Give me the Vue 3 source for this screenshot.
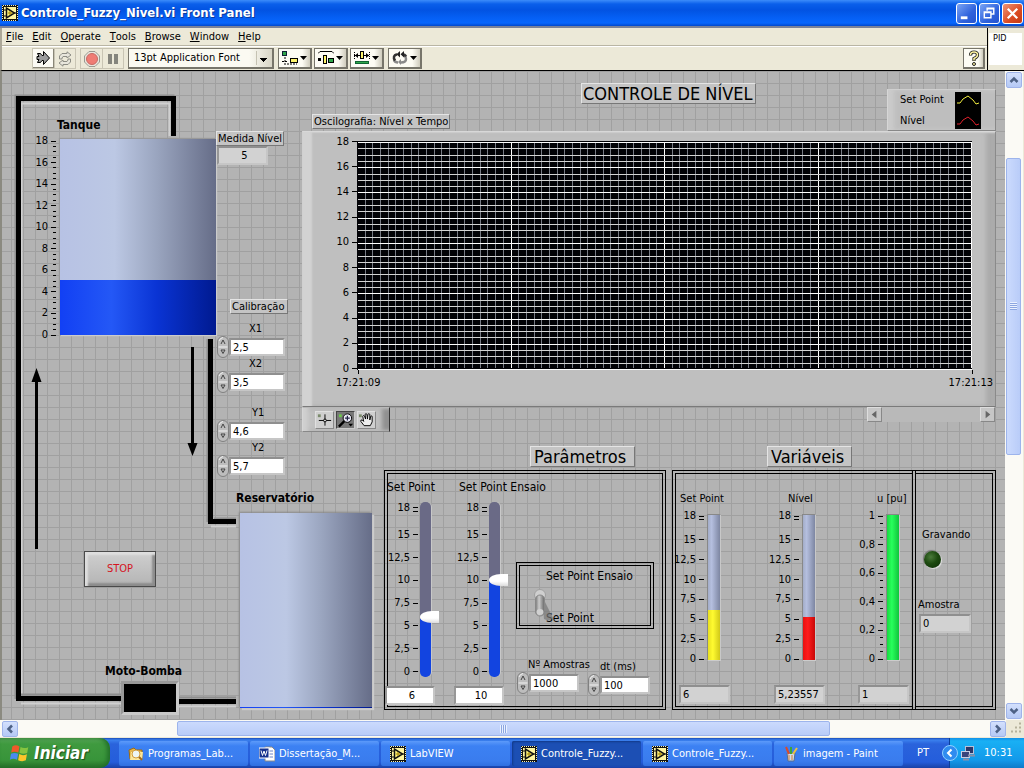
<script setup>
import { ref } from 'vue'

const menus = ['File', 'Edit', 'Operate', 'Tools', 'Browse', 'Window', 'Help']

const steps = (max, step) => {
  const out = []
  for (let i = 0; i * step <= max + 0.0001; i++) out.push(Math.round(i * step * 100) / 100)
  return out
}
const fmt = (v) => String(v).replace('.', ',')
const pct = (v, max) => ({ bottom: (v / max) * 100 + '%' })
const level = (v, max) => ({ height: (v / max) * 100 + '%' })

const evenTicks = steps(18, 2)
const halfTicks = steps(18, 0.5).filter((v) => v % 2 !== 0)
const barTicks = [0, 2.5, 5, 7.5, 10, 12.5, 15, 18]
const unitTicks = [0, 0.2, 0.4, 0.6, 0.8, 1]
const unitMinor = steps(1, 0.05).filter((v) => !unitTicks.includes(v))

const calibration = ref([
  { id: 'x1', label: 'X1', value: '2,5' },
  { id: 'x2', label: 'X2', value: '3,5' },
  { id: 'y1', label: 'Y1', value: '4,6' },
  { id: 'y2', label: 'Y2', value: '5,7' }
])
const acquisition = ref([
  { id: 'samples', label: 'Nº Amostras', value: '1000' },
  { id: 'dt', label: 'dt (ms)', value: '100' }
])
const sliders = ref([
  { id: 'sp', label: 'Set Point', value: 6 },
  { id: 'spe', label: 'Set Point Ensaio', value: 10 }
])
const bars = [
  { id: 'gsp', label: 'Set Point', value: 6.2, shown: '6', max: 18, ticks: barTicks, minor: [17.5], fill: 'yellow' },
  { id: 'gnv', label: 'Nível', value: 5.4, shown: '5,23557', max: 18, ticks: barTicks, minor: [17.5], fill: 'red' },
  { id: 'gu', label: 'u [pu]', value: 1, shown: '1', max: 1, ticks: unitTicks, minor: unitMinor, fill: 'green' }
]
const rows = Array.from({ length: 37 }, (_, i) => ({ p: Math.round(1 + (i * 227) / 36), major: i % 4 === 0 }))
const cols = Array.from({ length: 81 }, (_, i) => ({ p: Math.round((i * 614) / 80), major: i % 20 === 0 }))

const tasks = [
  { text: 'Programas_Lab...', icon: 'folder' },
  { text: 'Dissertação_M...', icon: 'word' },
  { text: 'LabVIEW', icon: 'vi' },
  { text: 'Controle_Fuzzy...', icon: 'vi', active: true },
  { text: 'Controle_Fuzzy...', icon: 'vi' },
  { text: 'imagem - Paint', icon: 'paint' }
]
</script>

<template>
  <div class="screen">
    <svg class="defs" width="0" height="0" aria-hidden="true">
      <symbol id="i-vi" viewBox="0 0 16 16">
        <rect width="16" height="16" fill="#111" />
        <path d="M1 .5h14M1 15.5h14M.5 1v14M15.500 1v14" stroke="#f6efb0" stroke-dasharray="1 1" />
        <rect x="2" y="2" width="12" height="12" fill="#fff6a0" />
        <path d="M2 5h3M2 11h3M11 8h3" stroke="#111" />
        <path d="M4.500 3v10l8-5z" fill="#fff27c" stroke="#111" stroke-width="1.500" />
        <path d="M6 8h4M8 6v4" stroke="#a08000" />
      </symbol>
      <symbol id="i-folder" viewBox="0 0 16 16">
        <path d="M1 4l5-2 2 2h6v9H2z" fill="#e8b64a" stroke="#9c6a14" />
        <path d="M3 6h12l-1 8H2z" fill="#fde79a" />
        <circle cx="8" cy="8" r="4" fill="#eef6f4" stroke="#d29c3c" />
        <path d="M11 11l3 3" stroke="#a06a20" stroke-width="2" />
      </symbol>
      <symbol id="i-word" viewBox="0 0 16 16">
        <path d="M6 1h7l3 3v11H6z" fill="#fff" stroke="#888" />
        <path d="M10 5h4M10 8h4M10 11h4" stroke="#6a84c8" />
        <rect x="0" y="2" width="10" height="10" fill="#17338f" stroke="#fff" />
        <path d="M2 4.500l1.500 5L5 5l1.500 4.500 1.500-5" fill="none" stroke="#fff" />
      </symbol>
      <symbol id="i-paint" viewBox="0 0 16 16">
        <path d="M4 7h8l-1 8H5z" fill="#cfdcea" stroke="#5a6c8a" />
        <path d="M6 8L3 1" stroke="#d94b2b" stroke-width="2" />
        <path d="M8 8V1" stroke="#3da53d" stroke-width="2" />
        <path d="M10 8l4-6" stroke="#f0c23a" stroke-width="2" />
        <path d="M6 9v5M9 9v5" stroke="#d87a2a" />
      </symbol>
      <symbol id="i-caret" viewBox="0 0 7 4"><path d="M0 0h7L3.500 4z" fill="#000" /></symbol>
    </svg>

    <header class="titlebar">
      <svg class="app-icon"><use href="#i-vi" /></svg>
      <h1>Controle_Fuzzy_Nivel.vi Front Panel</h1>
      <div class="caption">
        <button class="cap" aria-label="Minimize"><svg viewBox="0 0 20 20"><path d="M4 14.500h7" stroke="#fff" stroke-width="3" /></svg></button>
        <button class="cap" aria-label="Restore">
          <svg viewBox="0 0 20 20" fill="none" stroke="#fff"><path d="M7.500 7V4.500h7v6H12M7 5h8M4.500 8.500h7v6h-7zM4 9h8" stroke-width="1.500" /></svg>
        </button>
        <button class="cap close" aria-label="Close"><svg viewBox="0 0 20 20"><path d="M5 5l10 10M15 5L5 15" stroke="#fff" stroke-width="2.400" /></svg></button>
      </div>
    </header>

    <div class="bars">
      <div class="bars-main">
        <nav class="menu">
          <button v-for="m in menus" :key="m"><u>{{ m[0] }}</u>{{ m.slice(1) }}</button>
        </nav>
        <div class="toolbar">
          <div class="pair">
            <button class="tool lit" aria-label="Run">
              <svg viewBox="0 0 16 16"><path d="M2.500 3.500h3l1.500 2h1.500v-4l6 6.500-6 6.500v-4H7l-1.500 2h-3L4 9.500H2v-3h2z" fill="#9c9c9c" stroke="#000" /></svg>
            </button>
            <button class="tool" aria-label="Run Continuously">
              <svg viewBox="0 0 16 16" fill="#e8e6dc" stroke="#8c8c84"><path d="M2.500 8V5L5 2.500h5V.8L14 4l-4 3V5.500H6L5 7v1zM13.500 8v3L11 13.500H6v1.700L2 12l4-3v1.500h4l1-1.500V8z" /></svg>
            </button>
          </div>
          <div class="pair">
            <button class="tool" aria-label="Abort">
              <svg viewBox="0 0 16 16"><path d="M5 .5h6L15.500 5v6L11 15.500H5L.5 11V5z" fill="#e9e5dc" stroke="#9a9a92" /><circle cx="8" cy="8" r="5.500" fill="#f07c74" stroke="#c86a64" /></svg>
            </button>
            <button class="tool" aria-label="Pause"><svg viewBox="0 0 16 16"><path d="M5 3v10M11 3v10" stroke="#85857d" stroke-width="4" /></svg></button>
          </div>
          <select class="font-select" aria-label="Font"><option>13pt Application Font</option></select>
          <button class="drop" aria-label="Align Objects">
            <svg viewBox="0 0 16 14"><rect x=".5" y=".5" width="4" height="4" fill="#2fa84a" stroke="#123" /><rect x="8.500" y="7.500" width="7" height="4" fill="#fdf36a" stroke="#000" /><path d="M3 6v6M0 10.500h6M2 13h13" stroke="#000" stroke-dasharray="2 1" /></svg>
            <svg class="caret"><use href="#i-caret" /></svg>
          </button>
          <button class="drop" aria-label="Distribute Objects">
            <svg viewBox="0 0 16 14"><path d="M0 2.500l2-2h12l2 2" fill="none" stroke="#000" /><rect x="0" y="7" width="3" height="3" /><rect x="5.500" y="4.500" width="3" height="8" fill="#fdf36a" stroke="#000" /><rect x="10.500" y="7.500" width="5" height="4" fill="#2fa84a" stroke="#000" /></svg>
            <svg class="caret"><use href="#i-caret" /></svg>
          </button>
          <button class="drop" aria-label="Resize Objects">
            <svg viewBox="0 0 16 14"><path d="M0 4.500h6M10 4.500h6M.5 1v8M15.500 1v8" stroke="#000" stroke-dasharray="1 1" /><path d="M1 4.500h5M10 4.500h5" stroke="#000" /><path d="M4 2L1 4.500 4 7zM12 2l3 2.500L12 7z" /><rect x="6.500" y=".5" width="3" height="7" fill="#fdf36a" stroke="#000" /><rect x="1.500" y="10.500" width="13" height="2" fill="#2fa84a" stroke="#163" /></svg>
            <svg class="caret"><use href="#i-caret" /></svg>
          </button>
          <button class="drop reorder" aria-label="Reorder">
            <svg viewBox="0 0 16 14"><path d="M9 11.500q5 0 5-3.500 0-2-1.500-3M2 9q1 2.500 4 2.500" fill="none" stroke="#8a8a8a" stroke-width="2.500" /><path d="M9 8v6l-3-3z" fill="#8a8a8a" /><path d="M3 9.500Q0 5 5 3.200M10 3.200q3 0 4 2.300" fill="none" stroke="#333" stroke-width="2.500" /><path d="M8 0v6.500L4.500 3.200zM12 0v6.500L8.500 3.200z" fill="#222" /></svg>
            <svg class="caret"><use href="#i-caret" /></svg>
          </button>
          <button class="drop help" aria-label="Help">
            <svg viewBox="0 0 12 16"><path d="M2.500 5.500Q2.500 2 6 2t3.500 3Q9.500 7 6 8.500V11" fill="none" stroke="#222" stroke-width="3.200" /><path d="M2.500 5Q2.500 2 6 2t3.500 3Q9.500 7 6 8.500V10.500" fill="none" stroke="#fdf3a0" stroke-width="1.500" /><circle cx="6" cy="14" r="1.500" fill="#fdf3a0" stroke="#222" /></svg>
          </button>
        </div>
      </div>
      <div class="vi-icon"><span>PID</span></div>
    </div>

    <div class="work">
      <main class="panel">
        <svg class="piping" viewBox="0 0 300 649" aria-hidden="true">
          <g fill="none" stroke-width="5">
            <path d="M21.500 624V32.500h148V65M211.500 268v179.500M21 632.500h103M176 635.500h60M211 455.500h25" stroke="#d0d0d0" stroke-width="2" />
            <path d="M15.500 628V24.500h159M207.500 268V451M18 623.500h106M176 626.500h60M214 447.500h22" stroke="#8e8e8e" stroke-width="2" />
            <path d="M18.500 625V27.500h155V65" stroke="#000" />
            <path d="M16 627.500h108M176 630.500h60M210.500 268v182.500H236" stroke="#000" />
          </g>
          <path d="M121 610h58v34l-5-3h-50l-3 3z" fill="#999" />
          <path d="M176 613l3-3v34h-58l3-3h52z" fill="#cacaca" />
          <rect x="124" y="613" width="52" height="28" />
          <path d="M36.500 308v170M192.500 276v100" stroke="#000" stroke-width="3" />
          <path d="M36.500 297l5 14h-10zM192.500 385l5-13h-10z" />
        </svg>

        <h2 class="item b tanque-title">Tanque</h2>
        <div class="item tank-row">
          <div class="scale">
            <div v-for="v in halfTicks" :key="'m' + v" class="tick minor" :style="pct(v, 18)"><i></i></div>
            <div v-for="v in evenTicks" :key="v" class="tick" :style="pct(v, 18)"><span>{{ v }}</span><i></i></div>
          </div>
          <div class="tank"><div class="water" :style="level(5.050, 18)"></div></div>
        </div>

        <div class="item tag medida">Medida Nível</div>
        <output class="item readout five">5</output>
        <div class="item tag calib">Calibração</div>

        <div v-for="c in calibration" :key="c.id" class="item numeric" :class="c.id">
          <label :for="c.id">{{ c.label }}</label>
          <div class="num-row">
            <button class="spin" :aria-label="'Ajustar ' + c.label">
              <svg viewBox="0 0 12 22"><rect x=".5" y=".5" width="11" height="21" rx="5.500" fill="#bdbdbd" stroke="#808080" /><path d="M2 5Q3 2 6 1.500M1.500 11h9" fill="none" stroke="#f2f2f2" /><path d="M4 8l2-4 2 4M4 14h4l-2 3.500z" fill="none" stroke="#444" /></svg>
            </button>
            <input :id="c.id" v-model="c.value" type="text" />
          </div>
        </div>

        <h2 class="item b reserv-title">Reservatório</h2>
        <div class="item tank reserv"><div class="water" :style="level(0.100, 18)"></div></div>
        <button class="item stop">STOP</button>
        <h2 class="item b bomba-title">Moto-Bomba</h2>

        <h2 class="item tag big title">CONTROLE DE NÍVEL</h2>
        <div class="item tag oscilo">Oscilografia: Nível x Tempo</div>

        <div class="item legend">
          <ul><li>Set Point</li><li>Nível</li></ul>
          <svg viewBox="0 0 26 37"><rect width="26" height="37" /><path d="M2 11h3l3-4 5-3 5 4 3 4 3-1" fill="none" stroke="#f4f040" /><path d="M2 32h3l3-4 5-3 5 4 3 4 3-1" fill="none" stroke="#e0202c" /></svg>
        </div>

        <section class="item chart">
          <div class="plot-row">
            <div class="scale">
              <div v-for="v in evenTicks" :key="v" class="tick" :style="pct(v, 18)"><span>{{ v }}</span><i></i></div>
            </div>
            <svg class="plot" viewBox="0 0 615 229" shape-rendering="crispEdges">
              <rect width="615" height="229" fill="#020206" />
              <rect v-for="c in cols" :key="'c' + c.p" :x="c.p" y="0" width="1" height="229" :fill="c.major ? '#fff' : '#777a84'" />
              <rect v-for="r in rows" :key="'r' + r.p" x="0" :y="r.p" width="615" height="1" :fill="r.major ? '#fff' : '#d4d4d4'" />
              <path d="M.5 0v229M0 .5h615M0 227.500h615" stroke="#020206" />
            </svg>
          </div>
          <div class="time-ticks"><i></i><i></i></div>
          <div class="times"><span>17:21:09</span><span>17:21:13</span></div>
        </section>

        <div class="item palette">
          <button aria-label="Cursor"><svg viewBox="0 0 18 16"><rect x="2" y="2" width="3" height="3" fill="#7a8a6a" /><path d="M9.500 2v12M3 8.500h13" stroke="#000" /><circle cx="9.500" cy="8.500" r="1.500" fill="#ddd" stroke="#000" /></svg></button>
          <button class="on" aria-label="Zoom"><svg viewBox="0 0 18 16"><rect x="2" y="2" width="3" height="3" fill="#6aca4a" /><path d="M8 9l-6 6" stroke="#000" stroke-width="2.500" /><circle cx="11" cy="6" r="4.500" fill="#e8e8f4" stroke="#000" /><path d="M8.500 6h5M11 3.500v5" stroke="#224" stroke-width="1.300" /><path d="M12 12h5l-2.500 3z" /></svg></button>
          <button aria-label="Pan"><svg viewBox="0 0 18 16"><rect x="1" y="2" width="3" height="3" fill="#7a8a6a" /><path d="M6.500 14L3 9.500q-.500-2 1.500-1.500L6 9.500 5 4q.5-1.500 2 0l1 3-.5-5q1-1.500 2 0l.5 5 .5-5q1-1.500 2 0V8l1-4q1.500-1 1.500.500V10l-2 4z" fill="#eee" stroke="#000" /></svg></button>
        </div>
        <div class="item chart-scroll">
          <button aria-label="Anterior"><svg viewBox="0 0 14 14"><path d="M9 3v8L4 7z" fill="#666" /></svg></button>
          <button aria-label="Seguinte"><svg viewBox="0 0 14 14"><path d="M5 3v8l5-4z" fill="#666" /></svg></button>
        </div>

        <h2 class="item tag big param-title">Parâmetros</h2>
        <h2 class="item tag big var-title">Variáveis</h2>

        <section class="item frame params"></section>
        <div v-for="s in sliders" :key="s.id" class="item slider" :class="s.id">
          <label :for="s.id">{{ s.label }}</label>
          <div class="slide-row">
            <div class="scale">
              <div class="tick" :style="pct(17.550, 18)"><i></i></div>
              <div v-for="v in barTicks" :key="v" class="tick" :style="pct(v, 18)"><span>{{ fmt(v) }}</span><i></i></div>
            </div>
            <input :id="s.id" v-model.number="s.value" type="range" min="0" max="18" step="0.5" :style="{ '--fill': (s.value / 18) * 100 + '%' }" />
          </div>
          <output :for="s.id">{{ s.value }}</output>
        </div>

        <div class="item frame mode"></div>
        <div class="item mode-labels"><span>Set Point Ensaio</span><span>Set Point</span></div>
        <button class="item toggle" role="switch" aria-checked="false" aria-label="Set Point">
          <svg viewBox="0 0 22 34">
            <defs><linearGradient id="lever"><stop offset="0" stop-color="#777" /><stop offset=".4" stop-color="#ccc" /><stop offset="1" stop-color="#666" /></linearGradient></defs>
            <path d="M9 7l11 22q-3 4-9 1z" fill="#777" opacity=".7" />
            <circle cx="7" cy="6" r="5.500" fill="#cfcfcf" stroke="#a0a0a0" />
            <rect x="2.500" y="6" width="9" height="21" rx="4.500" fill="url(#lever)" stroke="#888" />
            <ellipse cx="7" cy="23" rx="3.500" ry="3" fill="#d0d0d0" />
          </svg>
        </button>

        <div v-for="c in acquisition" :key="c.id" class="item numeric" :class="c.id">
          <label :for="c.id">{{ c.label }}</label>
          <div class="num-row">
            <button class="spin" :aria-label="'Ajustar ' + c.label">
              <svg viewBox="0 0 12 22"><rect x=".5" y=".5" width="11" height="21" rx="5.500" fill="#bdbdbd" stroke="#808080" /><path d="M2 5Q3 2 6 1.500M1.500 11h9" fill="none" stroke="#f2f2f2" /><path d="M4 8l2-4 2 4M4 14h4l-2 3.500z" fill="none" stroke="#444" /></svg>
            </button>
            <input :id="c.id" v-model="c.value" type="text" />
          </div>
        </div>

        <section class="item frame vars"></section>
        <section class="item frame rec"></section>
        <div v-for="g in bars" :key="g.id" class="item gauge" :class="g.id">
          <span class="g-label">{{ g.label }}</span>
          <div class="g-row">
            <div class="scale">
              <div v-for="v in g.minor" :key="'m' + v" class="tick" :class="{ minor: g.max === 1 }" :style="pct(v, g.max)"><i></i></div>
              <div v-for="v in g.ticks" :key="v" class="tick" :style="pct(v, g.max)"><span>{{ fmt(v) }}</span><i></i></div>
            </div>
            <div class="tube"><div :class="g.fill" :style="level(g.value, g.max)"></div></div>
          </div>
          <output class="readout">{{ g.shown }}</output>
        </div>

        <div class="item gravando">Gravando</div>
        <div class="item led"></div>
        <div class="item amostra">Amostra</div>
        <output class="item readout zero">0</output>
      </main>

      <div class="vscroll">
        <button class="sb" aria-label="Para cima"><svg viewBox="0 0 14 14"><path d="M3.500 9L7 5.500 10.500 9" fill="none" stroke="#4d6185" stroke-width="2.500" /></svg></button>
        <div class="track"><div class="thumb"><i></i></div></div>
        <button class="sb" aria-label="Para baixo"><svg viewBox="0 0 14 14"><path d="M3.500 5L7 8.500 10.500 5" fill="none" stroke="#4d6185" stroke-width="2.500" /></svg></button>
      </div>
    </div>

    <div class="hscroll">
      <button class="sb" aria-label="Esquerda"><svg viewBox="0 0 14 14"><path d="M9 3.500L5.500 7 9 10.500" fill="none" stroke="#4d6185" stroke-width="2.500" /></svg></button>
      <div class="track"><div class="thumb"><i></i></div></div>
      <button class="sb" aria-label="Direita"><svg viewBox="0 0 14 14"><path d="M5 3.500L8.500 7 5 10.500" fill="none" stroke="#4d6185" stroke-width="2.500" /></svg></button>
      <svg class="grip" viewBox="0 0 18 16"><path d="M13 3h2M9 7h2M13 7h2M5 11h2M9 11h2M13 11h2" stroke="#b5b29c" stroke-width="2" /></svg>
    </div>

    <footer class="taskbar">
      <button class="start">
        <svg viewBox="0 0 20 20">
          <path d="M3 4q3-2 6.500 0L8.500 9.500Q5 8 2 9.500z" fill="#f0592a" />
          <path d="M10.500 4.500q3 2 7 .2L16.500 10q-3.500 1.500-7-.2z" fill="#86c440" />
          <path d="M1.800 10.700q3-1.500 6.500 0l-1 5.500q-3.500-2-6.500 0z" fill="#4a8af0" />
          <path d="M9.300 11q3 2 7 .2l-1 5.500q-3.500 1.500-7-.2z" fill="#fdc52a" />
        </svg>
        <span>Iniciar</span>
      </button>
      <div class="tasks">
        <button v-for="(t, i) in tasks" :key="i" class="task" :class="{ active: t.active }">
          <svg><use :href="'#i-' + t.icon" /></svg><span>{{ t.text }}</span>
        </button>
      </div>
      <span class="lang">PT</span>
      <div class="tray">
        <button class="chev" aria-label="Mostrar ícones"><svg viewBox="0 0 16 16"><circle cx="8" cy="8" r="7.500" fill="#2f8cf0" stroke="#8fd0ff" /><path d="M9.500 4.500L6 8l3.500 3.500" fill="none" stroke="#fff" stroke-width="2" /></svg></button>
        <svg class="net" viewBox="0 0 16 16"><rect x="5.500" y="1.500" width="8" height="7" fill="#2b3768" stroke="#b9bfd6" /><rect x="1.500" y="6.500" width="8" height="6" fill="#39457c" stroke="#c9cfe2" /><path d="M3 14.500h6M8 10.500h7" stroke="#8b90a8" stroke-width="2" /></svg>
        <time>10:31</time>
      </div>
    </footer>
  </div>
</template>

<style>
body { margin: 0; }
</style>

<style scoped>
* { box-sizing: border-box; }
.screen {
  display: flex; flex-direction: column; height: 100vh; min-height: 768px; overflow: hidden;
  font: 11px/14px "DejaVu Sans Condensed", "Noto Sans", sans-serif; color: #000; background: #ece9d8;
}
.defs { position: absolute; }
button, input, select { font: inherit; color: inherit; margin: 0; padding: 0; border: 0; background: none; border-radius: 0; }
button { display: flex; align-items: center; justify-content: center; white-space: nowrap; }
h1, h2, ul { margin: 0; padding: 0; font: inherit; list-style: none; }

.titlebar {
  display: flex; align-items: center; height: 28px; padding: 0 1px 2px 2px; flex: none;
  background: linear-gradient(#3c8cfa 0, #0a5fea 4px, #0253e2 10px, #0560f5 18px, #0766fd 23px, #0148cc 26px, #7a8299 26px);
}
.app-icon { width: 16px; height: 16px; flex: none; }
.titlebar h1 { flex: 1; margin-left: 3px; font-size: 13px; line-height: 18px; font-weight: bold; color: #fff; text-shadow: 1px 1px #0a3a9c; white-space: nowrap; }
.caption { display: flex; gap: 2px; }
.cap { width: 21px; height: 21px; border: 1px solid #fff; border-radius: 3px; background: linear-gradient(135deg, #7ba5f5, #2f62dc 60%, #2453cf); }
.cap.close { background: linear-gradient(135deg, #ee9478, #da4a22 60%, #c43a14); }
.cap svg { width: 19px; height: 19px; }

.bars { display: flex; flex: none; height: 43px; border-bottom: 1px solid #000; border-left: 2px solid #aca899; }
.bars-main { flex: 1; min-width: 0; }
.menu { display: flex; height: 18px; gap: 9px; padding-left: 4px; border-bottom: 1px solid #b9b5a4; }
.menu button { height: 18px; }
.toolbar { display: flex; align-items: center; height: 24px; padding: 0 2px 0 30px; border-top: 1px solid #fff; }
.pair { display: flex; height: 21px; margin-right: 4px; border: 1px solid #c9c5b4; }
.tool { width: 21px; height: 19px; }
.tool + .tool { border-left: 1px solid #c9c5b4; }
.tool svg { width: 16px; height: 16px; }
.tool.lit { background: #fcfbf4; border: 1px solid #8a8778; border-width: 0 1px 1px 0; }
.font-select {
  width: 146px; height: 21px; padding-left: 5px; margin-right: 4px; border: 1px solid #77756a; border-width: 1px 2px 2px 1px; appearance: none;
  background: linear-gradient(#000, #000) 131px 9px / 7px 1px no-repeat, linear-gradient(#000, #000) 132px 10px / 5px 1px no-repeat,
    linear-gradient(#000, #000) 133px 11px / 3px 1px no-repeat, linear-gradient(#000, #000) 134px 12px / 1px 1px no-repeat,
    linear-gradient(#c5c2b2, #c5c2b2) 127px 2px / 1px 14px no-repeat, linear-gradient(90deg, #fbfaf2 84%, #d8d5c6);
}
.drop { width: 34px; height: 21px; margin-right: 2px; gap: 2px; border: 1px solid #77756a; border-width: 1px 2px 2px 1px; background: linear-gradient(90deg, #fdfcf4 75%, #cfccbd); }
.drop svg { width: 16px; height: 14px; }
.drop .caret { width: 7px; height: 4px; }
.reorder { margin-left: 2px; }
.help { width: 22px; margin-left: auto; margin-right: 0; }
.help svg { width: 12px; height: 16px; }
.vi-icon { width: 37px; border-left: 1px solid #000; padding: 5px 2px 5px 1px; }
.vi-icon span { display: block; height: 32px; padding: 0 4px; background: #fff; font-size: 9px; line-height: 10px; }

.work { display: flex; flex: 1; min-height: 0; }
.panel {
  position: relative; flex: 1; min-width: 0; overflow: hidden; border-left: 2px solid #8b8a80;
  background: repeating-linear-gradient(90deg, transparent 0 9px, #a0a0a0 9px 10px, transparent 10px 12px), repeating-linear-gradient(#a0a0a0 0 1px, transparent 1px 12px), #b3b3b3;
}
.item { position: absolute; white-space: nowrap; }
.piping { position: absolute; left: -2px; top: 0; width: 300px; height: 649px; }
.b { font-weight: bold; font-size: 12px; }
.tanque-title { left: 55px; top: 47px; }
.reserv-title { left: 234px; top: 420px; }
.bomba-title { left: 103px; top: 593px; }

.scale { position: relative; flex: none; }
.tick { position: absolute; right: 0; height: 0; display: flex; align-items: center; gap: 3px; }
.tick i { width: 5px; height: 1px; background: #000; }
.tick.minor i { width: 3px; }

.tank-row { left: 32px; top: 68px; display: flex; gap: 4px; align-items: flex-end; }
.tank-row .scale { width: 22px; height: 194px; }
.tank { position: relative; display: flex; align-items: flex-end; background: linear-gradient(90deg, #b7c2e4, #bcc8e4 35%, #9aa5bf 62%, #666d88); }
.tank-row .tank { width: 156px; height: 196px; box-shadow: -1px -1px 1px #999, 1px 1px 1px #ccc; }
.water { width: 100%; background: linear-gradient(90deg, #1240f4, #2458f6 33%, #0a34d4 62%, #001a90); }
.reserv { left: 238px; top: 442px; width: 132px; height: 195px; box-shadow: -1px -1px 2px #888, 2px 2px 1px #ccc; }

.tag { padding: 0 1px; background: #c4c4c4; border: 1px solid; border-color: #e4e4e4 #777 #777 #e4e4e4; line-height: 13px; }
.medida { left: 214px; top: 60px; width: 68px; }
.calib { left: 228px; top: 228px; width: 58px; }
.oscilo { left: 310px; top: 43px; width: 138px; }
.big { font-size: 18px; line-height: 19px; }
.title { left: 579px; top: 12px; width: 175px; }
.param-title { left: 528px; top: 375px; width: 105px; padding-left: 3px; }
.var-title { left: 765px; top: 375px; width: 85px; padding-left: 3px; }

.readout { display: block; width: 51px; height: 19px; padding: 0 2px; line-height: 15px; background: #d2d2d2; border: 2px solid; border-color: #8f8f8f #c6c6c6 #c6c6c6 #979797; }
.five { left: 215px; top: 75px; padding-left: 6px; text-align: center; }
.zero { left: 917px; top: 543px; width: 52px; }

.numeric label { display: block; height: 14px; }
.num-row { display: flex; align-items: center; }
.spin { width: 12px; height: 22px; }
.spin svg { width: 12px; height: 22px; }
.numeric input { width: 56px; height: 18px; padding: 0 2px; line-height: 14px; background: #fff; border: 2px solid; border-color: #8f8f8f #c6c6c6 #c6c6c6 #979797; }
.x1, .x2, .y1, .y2 { left: 215px; }
.x1 label, .x2 label { padding-left: 32px; }
.y1 label, .y2 label { padding-left: 35px; }
.x1 { top: 251px; }
.x2 { top: 286px; }
.y1 { top: 335px; }
.y2 { top: 370px; }
.samples { left: 515px; top: 587px; }
.samples label { padding-left: 11px; }
.samples input, .dt input { width: 50px; }
.dt { left: 586px; top: 589px; }
.dt label { padding-left: 12px; }

.stop { left: 82px; top: 480px; width: 72px; height: 36px; color: #d4141e; background: linear-gradient(#cfcfcf, #b4b4b4); border: 1px solid #4a4a4a; box-shadow: inset 3px 3px 2px #dedede, inset -3px -3px 2px #8d8d8d; }

.legend { left: 885px; top: 18px; width: 109px; height: 42px; display: flex; justify-content: space-between; padding: 2px 14px 0 12px; background: #bebebe; border: 1px solid; border-color: #cfcfcf #888 #888 #d6d6d6; box-shadow: inset 6px 0 4px #cbcbcb; }
.legend ul { display: flex; flex-direction: column; gap: 7px; padding-top: 1px; }
.legend svg { width: 26px; height: 37px; }
.chart { left: 300px; top: 60px; width: 694px; height: 276px; padding-top: 9px; background: #bfbfbf; border: 1px solid; border-color: #d8d8d8 #8a8a8a #7a7a7a #d0d0d0; box-shadow: inset 9px 1px 2px #d2d2d2, inset -9px 0 4px #ababab; }
.plot-row { display: flex; align-items: center; height: 228px; }
.plot-row .scale { width: 54px; height: 227px; }
.plot { width: 615px; height: 229px; }
.time-ticks { display: flex; justify-content: space-between; padding: 1px 22px 0 55px; height: 5px; }
.time-ticks i { width: 1px; background: #000; }
.times { display: flex; justify-content: space-between; padding: 2px 2px 0 33px; }
.palette { left: 300px; top: 336px; width: 88px; height: 25px; display: flex; gap: 2px; padding: 3px 0 0 12px; background: #c0c0c0; border: 1px solid; border-color: #b8b8b8 #333 #888 #d6d6d6; box-shadow: inset 5px 0 4px #d0d0d0, inset -7px 0 4px #909090; }
.palette button { width: 19px; height: 18px; background: #cfcfcf; border: 1px solid; border-color: #e0e0e0 #888 #888 #e0e0e0; }
.palette .on { background: #777; border-color: #444 #ccc #ccc #444; }
.palette svg { width: 18px; height: 16px; }
.chart-scroll { left: 865px; top: 336px; width: 128px; display: flex; justify-content: space-between; background: #b9b9b9; }
.chart-scroll button { width: 15px; height: 15px; background: #c6c6c6; border: 1px solid; border-color: #ddd #888 #888 #ddd; }
.chart-scroll svg { width: 13px; height: 13px; }

.frame { border: 4px double #000; }
.params { left: 382px; top: 399px; width: 282px; height: 240px; }
.vars { left: 670px; top: 399px; width: 244px; height: 240px; }
.rec { left: 910px; top: 399px; width: 84px; height: 240px; }
.mode { left: 514px; top: 491px; width: 138px; height: 67px; }
.mode-labels { left: 544px; top: 498px; display: flex; flex-direction: column; gap: 28px; font-size: 12px; }
.toggle { left: 531px; top: 518px; width: 22px; height: 34px; }
.toggle svg { width: 22px; height: 34px; }

.slider label { display: block; font-size: 12px; }
.slide-row { display: flex; align-items: center; gap: 2px; }
.slide-row .scale { width: 31px; height: 164px; }
.slide-row input { appearance: none; writing-mode: vertical-lr; direction: rtl; width: 19px; height: 175px; }
.slide-row input::-webkit-slider-runnable-track { width: 11px; height: 175px; margin-right: 8px; border-radius: 5px; background: linear-gradient(0deg, #1244e0 var(--fill), #6a6a86 var(--fill)); box-shadow: 1px 0 #c8c8c8; }
.slide-row input::-webkit-slider-thumb { appearance: none; width: 19px; height: 12px; border-radius: 12px 0 0 12px / 6px 0 0 6px; background: linear-gradient(#fff 60%, #dcdcdc); }
.slider output { display: block; width: 50px; height: 19px; line-height: 15px; text-align: center; background: #fff; border: 2px solid; border-color: #8f8f8f #c6c6c6 #c6c6c6 #979797; }
.slider.sp { left: 385px; top: 409px; }
.slider.spe { left: 454px; top: 409px; }
.slider .slide-row { margin-top: 8px; }
.slider output { margin-top: 9px; margin-left: -2px; padding-left: 4px; }
.spe label { padding-left: 3px; }

.g-row { display: flex; align-items: center; height: 145px; margin-top: 9px; }
.g-row .scale { width: 24px; height: 143px; }
.g-label { display: block; }
.tube { width: 14px; height: 147px; margin-left: 3px; display: flex; align-items: flex-end; background: linear-gradient(90deg, #a3adc8, #b5bfdf 30%, #7d86a2); border: 1px solid; border-color: #888 #c8c8c8 #ccc #888; }
.tube div { width: 100%; }
.yellow { background: linear-gradient(90deg, #e8e020, #fffb30 40%, #d0c818); }
.red { background: linear-gradient(90deg, #e81010, #ff1c1c 40%, #c80808); }
.green { background: linear-gradient(90deg, #18d840, #28ff5c 40%, #10c43c); }
.gauge .readout { margin-top: 25px; margin-left: -1px; }
.gsp { left: 678px; top: 421px; }
.gnv { left: 773px; top: 421px; }
.gu { left: 857px; top: 421px; }
.gnv .g-label { padding-left: 13px; }
.gu .g-label { padding-left: 18px; }

.gravando { left: 920px; top: 457px; }
.led { left: 922px; top: 480px; width: 17px; height: 17px; border-radius: 50%; background: radial-gradient(circle at 40% 35%, #4a7a3a, #1d4a10 45%, #0c2c06); box-shadow: 1px 1px 1px #e4e4e4, -1px -1px 1px #777; }
.amostra { left: 916px; top: 527px; }

.vscroll { display: flex; flex-direction: column; width: 19px; padding: 1px 2px 1px 1px; border-right: 1px solid #ece9d8; background: #fbfaf5; }
.sb { width: 16px; height: 16px; flex: none; background: linear-gradient(#d3e0fd, #b5c9f5); border: 1px solid #9fb4ea; border-radius: 2px; }
.sb svg { width: 14px; height: 14px; }
.track { flex: 1; display: flex; min-width: 0; min-height: 0; }
.vscroll .track { flex-direction: column; }
.track::before { content: ""; flex: 70; }
.track::after { content: ""; flex: 249; }
.thumb { flex: 297; display: flex; align-items: center; justify-content: center; background: linear-gradient(90deg, #cbdafd, #b9ccf8); border: 1px solid #9db4ec; border-radius: 2px; }
.thumb i { width: 7px; height: 8px; background: repeating-linear-gradient(#eaf1ff 0 1px, #8ca6e0 1px 2px); }
.hscroll { display: flex; align-items: center; flex: none; height: 18px; padding-left: 2px; background: #fbfaf5; border-bottom: 1px solid #ece9d8; }
.hscroll .track { height: 15px; }
.hscroll .track::before { flex: 159; }
.hscroll .track::after { flex: 160; }
.hscroll .thumb { flex: 653; background: linear-gradient(#cbdafd, #b9ccf8); }
.hscroll .thumb i { background: repeating-linear-gradient(90deg, #eaf1ff 0 1px, #8ca6e0 1px 2px); }
.grip { width: 18px; height: 17px; background: #ece9d8; }

.taskbar { display: flex; flex: none; height: 30px; color: #fff; background: linear-gradient(#1a4cb8 0, #3a80ee 2px, #2a63dc 6px, #245ddb 24px, #1941a5); }
.start { width: 110px; justify-content: flex-start; gap: 3px; padding: 0 0 1px 9px; border-radius: 0 10px 10px 0; background: linear-gradient(#5aa85a 0, #3f9a3f 6px, #38943a 22px, #256e27); box-shadow: inset -3px 0 4px #22702a; }
.start svg { width: 22px; height: 22px; }
.start span { font-size: 17px; line-height: 20px; font-weight: bold; font-style: italic; text-shadow: 1px 1px 1px #1d4d1d; }
.tasks { display: flex; flex: 1; min-width: 0; gap: 2px; padding: 3px 0 2px 9px; }
.task { flex: 1; min-width: 0; justify-content: flex-start; gap: 4px; padding-left: 9px; border-radius: 2px; background: linear-gradient(#5c9afa, #3c81f3 5px, #3a7cee 20px, #3070e0); }
.task svg { width: 16px; height: 16px; flex: none; }
.task.active { background: #1c4fb4; box-shadow: inset 1px 1px 2px #123a88; }
.lang { align-self: center; padding: 0 20px 0 14px; }
.tray { display: flex; align-items: center; width: 75px; gap: 2px; border-left: 1px solid #0a3f9c; background: linear-gradient(#1290e8 0, #19b0f4 3px, #1299ea 22px, #0e7ac8); }
.chev { width: 16px; height: 16px; margin-left: -8px; }
.chev svg { width: 16px; height: 16px; }
.net { width: 16px; height: 16px; }
.tray time { margin-left: 6px; }
</style>
